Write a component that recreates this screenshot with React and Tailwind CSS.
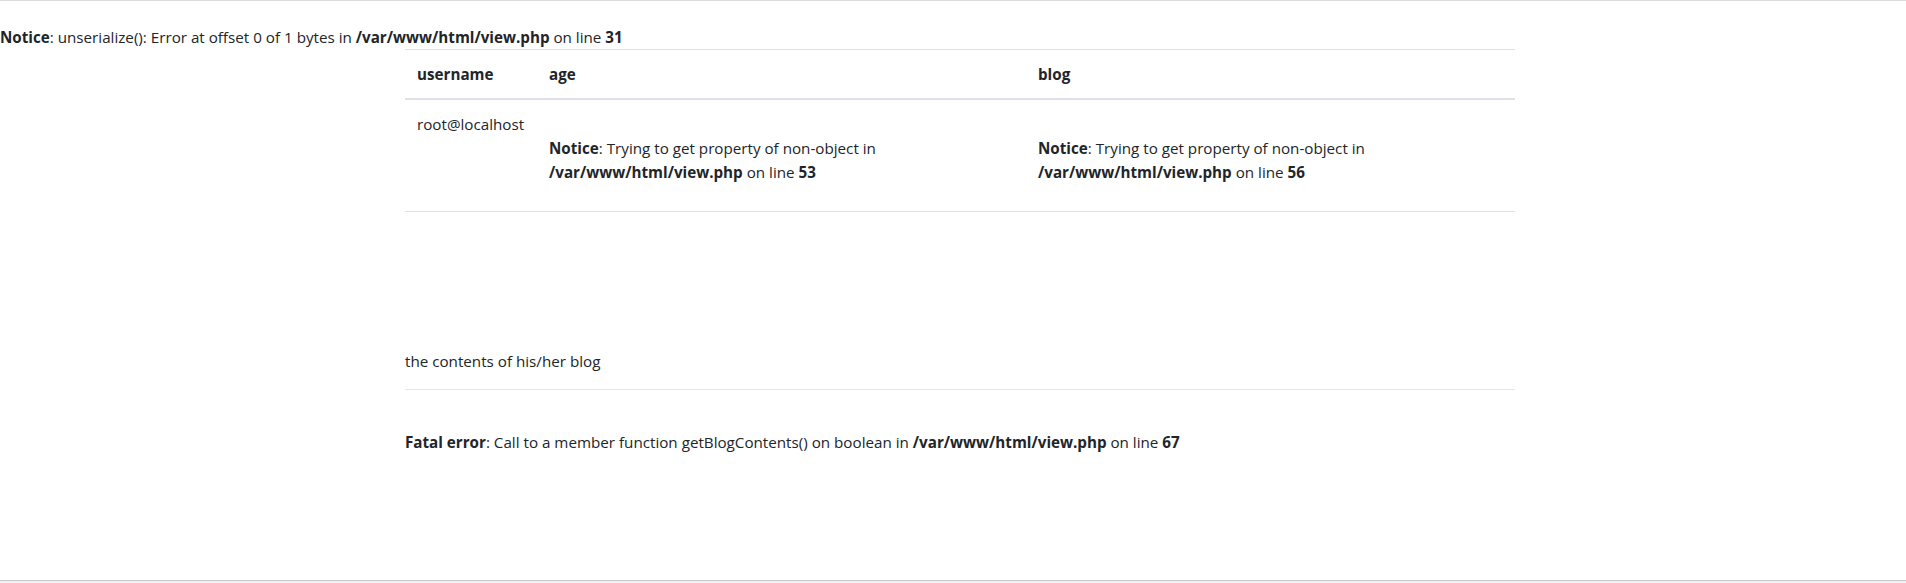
const notice = (label, msg, line) => (
  <>
    <b className="font-bold">{label}</b>: {msg} in <b className="font-bold">/var/www/html/view.php</b> on line <b className="font-bold">{line}</b>
  </>
);

export default function App() {
  return (
    <div className="h-[583px] flex flex-col bg-white text-[#212529] text-[15.2px] leading-6 font-['Open_Sans',sans-serif] border-t border-[#dcdcdc]">
      <div className="flex-1">
        <div className="pt-6">{notice('Notice', 'unserialize(): Error at offset 0 of 1 bytes', 31)}</div>
        <div className="ml-[390px] w-[1140px] px-[15px]">
          <table className="w-full border-collapse table-fixed">
            <colgroup>
              <col className="w-[132px]" />
              <col className="w-[489px]" />
              <col />
            </colgroup>
            <thead>
              <tr>
                <th className="text-left font-bold p-3 border-t border-b-2 border-[#dee2e6]">username</th>
                <th className="text-left font-bold p-3 border-t border-b-2 border-[#dee2e6]">age</th>
                <th className="text-left font-bold p-3 border-t border-b-2 border-[#dee2e6]">blog</th>
              </tr>
            </thead>
            <tbody>
              <tr>
                <td className="align-top px-3 pt-3 pb-[27px] border-b border-[#dee2e6]">root@localhost</td>
                <td className="align-top px-3 pt-3 pb-[27px] border-b border-[#dee2e6]">
                  <br />
                  {notice('Notice', 'Trying to get property of non-object', 53)}
                </td>
                <td className="align-top px-3 pt-3 pb-[27px] border-b border-[#dee2e6]">
                  <br />
                  {notice('Notice', 'Trying to get property of non-object', 56)}
                </td>
              </tr>
            </tbody>
          </table>
          <p className="mt-[137px]">the contents of his/her blog</p>
          <hr className="my-4 border-t border-[#e6e6e6]" />
          <div>
            <br />
            {notice('Fatal error', 'Call to a member function getBlogContents() on boolean', 67)}
          </div>
        </div>
      </div>
      <div className="h-[3px] border-t border-[#c8c8c8] bg-[#eff1f4]" />
    </div>
  );
}
